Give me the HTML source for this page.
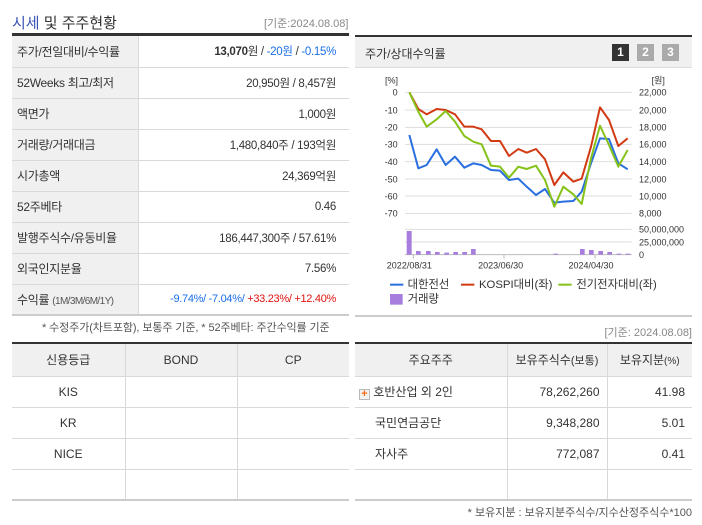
<!DOCTYPE html>
<html><head><meta charset="utf-8"><style>
*{margin:0;padding:0;box-sizing:border-box}
body{width:702px;height:525px;background:#fff;font-family:"Liberation Sans","Noto Sans CJK KR",sans-serif;font-size:12px;color:#333;position:relative;overflow:hidden}
.a{position:absolute;white-space:nowrap}
table{border-collapse:collapse;position:absolute;table-layout:fixed}
td{border-bottom:1px solid #d9d9d9;height:31px;padding:0 13px 0 10px;font-size:12px;color:#333;white-space:nowrap;overflow:hidden}
.t1 td.l{background:#f0f0f0;border-right:1px solid #d9d9d9;font-size:12px;letter-spacing:-0.3px;padding-left:5px}
.t1 td.r{text-align:right;font-size:11.5px;letter-spacing:-0.3px}
.bt td{text-align:center;border-right:1px solid #d9d9d9;padding:0}
.bt td:last-child{border-right:none}
.bt tr.h td{background:#f0f0f0;height:32px}
.blue{color:#1a6ee8}.red{color:#e0120e}
</style></head><body>
<div class="a" style="left:12px;top:12px;font-size:15px;color:#333"><span style="color:#3a53b8">시세</span> 및 주주현황</div>
<div class="a" style="left:264px;top:15px;font-size:11px;color:#888">[기준:2024.08.08]</div>
<div class="a" style="left:12px;top:33px;width:337px;height:3px;background:#333"></div>
<table class="t1" style="left:12px;top:36px;width:337px">
<col style="width:126px"><col>
<tr><td class="l">주가/전일대비/수익률</td><td class="r"><b>13,070</b>원 / <span class="blue">-20원</span> / <span class="blue">-0.15%</span></td></tr>
<tr><td class="l">52Weeks 최고/최저</td><td class="r">20,950원 / 8,457원</td></tr>
<tr><td class="l">액면가</td><td class="r">1,000원</td></tr>
<tr><td class="l">거래량/거래대금</td><td class="r">1,480,840주 / 193억원</td></tr>
<tr><td class="l">시가총액</td><td class="r">24,369억원</td></tr>
<tr><td class="l">52주베타</td><td class="r">0.46</td></tr>
<tr><td class="l">발행주식수/유동비율</td><td class="r">186,447,300주 / 57.61%</td></tr>
<tr><td class="l">외국인지분율</td><td class="r">7.56%</td></tr>
<tr><td class="l" style="border-bottom:2px solid #ccc">수익률 <span style="font-size:10px;color:#555;letter-spacing:-0.6px">(1M/3M/6M/1Y)</span></td><td class="r" style="border-bottom:2px solid #ccc;font-size:11px;letter-spacing:-0.3px"><span class="blue">-9.74%/ -7.04%/</span> <span class="red">+33.23%/ +12.40%</span></td></tr>
</table>
<div class="a" style="left:42px;top:319px;font-size:11px;color:#555;letter-spacing:-0.1px">* 수정주가(차트포함), 보통주 기준, * 52주베타: 주간수익률 기준</div>

<div class="a" style="left:355px;top:35px;width:337px;height:2px;background:#333"></div>
<div class="a" style="left:355px;top:37px;width:337px;height:31px;background:#f0f0f0;border-bottom:1px solid #ddd"></div>
<div class="a" style="left:365px;top:45px;font-size:12px">주가/상대수익률</div>
<div class="a" style="left:612px;top:44px;width:17px;height:17px;background:#333;color:#fff;font-weight:bold;text-align:center;line-height:17px;font-size:12px">1</div>
<div class="a" style="left:637px;top:44px;width:17px;height:17px;background:#aaa;color:#fff;font-weight:bold;text-align:center;line-height:17px;font-size:12px">2</div>
<div class="a" style="left:662px;top:44px;width:17px;height:17px;background:#aaa;color:#fff;font-weight:bold;text-align:center;line-height:17px;font-size:12px">3</div>

<svg class="a" style="left:355px;top:30px" width="347" height="280" viewBox="0 0 1041 840">
<g stroke="#ddd" stroke-width="3">
<line x1="150" y1="187" x2="830" y2="187"/><line x1="150" y1="240" x2="830" y2="240"/><line x1="150" y1="292" x2="830" y2="292"/><line x1="150" y1="343" x2="830" y2="343"/><line x1="150" y1="395" x2="830" y2="395"/><line x1="150" y1="447" x2="830" y2="447"/><line x1="150" y1="498" x2="830" y2="498"/><line x1="150" y1="550" x2="830" y2="550"/><line x1="150" y1="598" x2="830" y2="598"/><line x1="150" y1="636" x2="830" y2="636"/>
</g>
<line x1="150" y1="674" x2="830" y2="674" stroke="#bbb" stroke-width="3"/>
<g stroke="#bbb" stroke-width="3"><line x1="175" y1="674" x2="175" y2="686"/><line x1="447" y1="674" x2="447" y2="686"/><line x1="720" y1="674" x2="720" y2="686"/></g>
<g fill="#a77ede">
<rect x="155" y="603" width="15" height="71"/><rect x="183" y="663" width="14" height="11"/><rect x="213" y="663" width="14" height="11"/><rect x="240" y="666" width="14" height="8"/><rect x="268" y="668" width="14" height="6"/><rect x="295" y="666" width="14" height="8"/><rect x="322" y="666" width="14" height="8"/><rect x="348" y="657" width="14" height="17"/><rect x="595" y="671" width="14" height="3"/><rect x="675" y="657" width="14" height="17"/><rect x="702" y="660" width="14" height="14"/><rect x="730" y="663" width="14" height="11"/><rect x="757" y="666" width="14" height="8"/><rect x="785" y="671" width="14" height="3"/><rect x="812" y="671" width="14" height="3"/>
</g>
<g fill="none" stroke-width="6" stroke-linejoin="round">
<polyline stroke="#2a6fe0" points="163,315 190,415 215,405 245,358 272,405 300,380 328,413 355,400 380,405 408,420 435,422 462,450 490,446 515,470 543,495 570,477 598,518 625,515 655,513 680,485 708,400 735,325 762,327 790,400 818,418"/>
<polyline stroke="#d23a14" points="163,187 190,237 215,253 245,237 272,240 300,253 328,290 355,290 380,298 408,333 435,333 462,378 490,357 515,368 543,357 570,388 598,465 625,427 655,455 680,446 708,350 735,232 762,270 790,348 818,325"/>
<polyline stroke="#86c21a" points="163,187 190,245 215,290 245,268 272,243 300,275 328,318 355,335 380,343 408,407 435,410 462,443 490,410 515,417 543,407 570,450 598,530 625,470 655,493 680,522 708,385 735,287 762,345 790,410 818,360"/>
</g>
<g font-family="Liberation Sans,sans-serif" font-size="27" fill="#333">
<text x="90" y="160">[%]</text><text x="890" y="160">[원]</text>
<g text-anchor="end"><text x="128" y="197">0</text><text x="128" y="250">-10</text><text x="128" y="302">-20</text><text x="128" y="353">-30</text><text x="128" y="405">-40</text><text x="128" y="457">-50</text><text x="128" y="508">-60</text><text x="128" y="560">-70</text></g>
<text x="852" y="197">22,000</text><text x="852" y="250">20,000</text><text x="852" y="302">18,000</text><text x="852" y="353">16,000</text><text x="852" y="405">14,000</text><text x="852" y="457">12,000</text><text x="852" y="508">10,000</text><text x="852" y="560">8,000</text>
<text x="852" y="608">50,000,000</text><text x="852" y="646">25,000,000</text><text x="852" y="684">0</text>
<g text-anchor="middle"><text x="163" y="716">2022/08/31</text><text x="437" y="716">2023/06/30</text><text x="708" y="716">2024/04/30</text></g>
</g>
<g font-family="Liberation Sans,Noto Sans CJK KR,sans-serif" font-size="34" fill="#333">
<rect x="105" y="761" width="40" height="6" fill="#2a6fe0"/><text x="158" y="774">대한전선</text>
<rect x="318" y="761" width="40" height="6" fill="#d23a14"/><text x="372" y="774">KOSPI대비(좌)</text>
<rect x="610" y="761" width="40" height="6" fill="#86c21a"/><text x="664" y="774">전기전자대비(좌)</text>
<rect x="105" y="792" width="38" height="32" fill="#a77ede"/><text x="158" y="818">거래량</text>
</g>
</svg>
<div class="a" style="left:355px;top:315px;width:337px;height:2px;background:#ccc"></div>
<div class="a" style="right:10px;top:324px;font-size:11px;color:#888">[기준: 2024.08.08]</div>

<div class="a" style="left:12px;top:342px;width:337px;height:2px;background:#333"></div>
<table class="bt" style="left:12px;top:344px;width:337px">
<col style="width:113px"><col style="width:112px"><col>
<tr class="h"><td>신용등급</td><td>BOND</td><td>CP</td></tr>
<tr><td>KIS</td><td></td><td></td></tr>
<tr><td>KR</td><td></td><td></td></tr>
<tr><td>NICE</td><td></td><td></td></tr>
<tr><td style="border-bottom:2px solid #ccc"></td><td style="border-bottom:2px solid #ccc"></td><td style="border-bottom:2px solid #ccc"></td></tr>
</table>

<div class="a" style="left:355px;top:342px;width:337px;height:2px;background:#333"></div>
<table class="bt" style="left:355px;top:344px;width:337px">
<col style="width:152px"><col style="width:100px"><col>
<tr class="h"><td>주요주주</td><td>보유주식수<span style="font-size:11px">(보통)</span></td><td>보유지분<span style="font-size:10px">(%)</span></td></tr>
<tr><td style="text-align:left;padding-left:4px"><span style="display:inline-block;width:11px;height:11px;border:1px solid #bbb;background:#f4f4f4;color:#f26b0f;font-size:11px;line-height:9px;text-align:center;font-weight:bold;vertical-align:-1px">+</span> 호반산업 외 2인</td><td style="text-align:right;padding-right:7px">78,262,260</td><td style="text-align:right;padding-right:7px">41.98</td></tr>
<tr><td style="text-align:left;padding-left:20px">국민연금공단</td><td style="text-align:right;padding-right:7px">9,348,280</td><td style="text-align:right;padding-right:7px">5.01</td></tr>
<tr><td style="text-align:left;padding-left:20px">자사주</td><td style="text-align:right;padding-right:7px">772,087</td><td style="text-align:right;padding-right:7px">0.41</td></tr>
<tr><td style="border-bottom:2px solid #ccc"></td><td style="border-bottom:2px solid #ccc"></td><td style="border-bottom:2px solid #ccc"></td></tr>
</table>
<div class="a" style="right:10px;top:504px;font-size:11px;color:#555">* 보유지분 : 보유지분주식수/지수산정주식수*100</div>
</body></html>
